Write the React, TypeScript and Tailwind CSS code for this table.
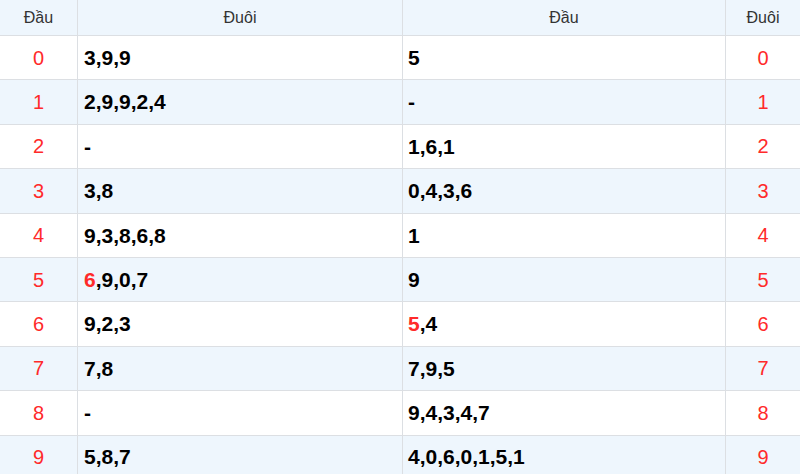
import React from "react";

const rows: [string, string, string, string][] = [
  ["0", "3,9,9", "5", "0"],
  ["1", "2,9,9,2,4", "-", "1"],
  ["2", "-", "1,6,1", "2"],
  ["3", "3,8", "0,4,3,6", "3"],
  ["4", "9,3,8,6,8", "1", "4"],
  ["5", "*6,9,0,7", "9", "5"],
  ["6", "9,2,3", "*5,4", "6"],
  ["7", "7,8", "7,9,5", "7"],
  ["8", "-", "9,4,3,4,7", "8"],
  ["9", "5,8,7", "4,0,6,0,1,5,1", "9"],
];

function Val({ v }: { v: string }) {
  if (v.startsWith("*")) {
    return (
      <>
        <span className="text-[#ff2a2a]">{v[1]}</span>
        {v.slice(2)}
      </>
    );
  }
  return <>{v}</>;
}

export default function App() {
  return (
    <div
      className="w-[800px] h-[474px] overflow-hidden bg-white"
      style={{ fontFamily: '"Liberation Sans", Arial, sans-serif' }}
    >
      <div className="grid grid-cols-[78px_325px_323px_74px]">
        <div className="h-[36px] flex items-center justify-center bg-[#eef6fd] border-r border-b border-[#dcdfe3] text-[16px] text-[#333]">Đầu</div>
        <div className="h-[36px] flex items-center justify-center bg-[#eef6fd] border-r border-b border-[#dcdfe3] text-[16px] text-[#333]">Đuôi</div>
        <div className="h-[36px] flex items-center justify-center bg-[#eef6fd] border-r border-b border-[#dcdfe3] text-[16px] text-[#333]">Đầu</div>
        <div className="h-[36px] flex items-center justify-center bg-[#eef6fd] border-b border-[#dcdfe3] text-[16px] text-[#333]">Đuôi</div>
        {rows.map((r, i) => {
          const bg = i % 2 === 1 ? "bg-[#eef6fd]" : "bg-white";
          return (
            <React.Fragment key={i}>
              <div className={`h-[44.4px] flex items-center justify-center ${bg} border-r border-b border-[#dcdfe3] text-[20px] text-[#ff2a2a]`}>{r[0]}</div>
              <div className={`h-[44.4px] flex items-center pl-[6px] ${bg} border-r border-b border-[#dcdfe3] text-[21px] font-bold text-black`}><span><Val v={r[1]} /></span></div>
              <div className={`h-[44.4px] flex items-center pl-[5px] ${bg} border-r border-b border-[#dcdfe3] text-[21px] font-bold text-black`}><span><Val v={r[2]} /></span></div>
              <div className={`h-[44.4px] flex items-center justify-center ${bg} border-b border-[#dcdfe3] text-[20px] text-[#ff2a2a]`}>{r[3]}</div>
            </React.Fragment>
          );
        })}
      </div>
    </div>
  );
}
